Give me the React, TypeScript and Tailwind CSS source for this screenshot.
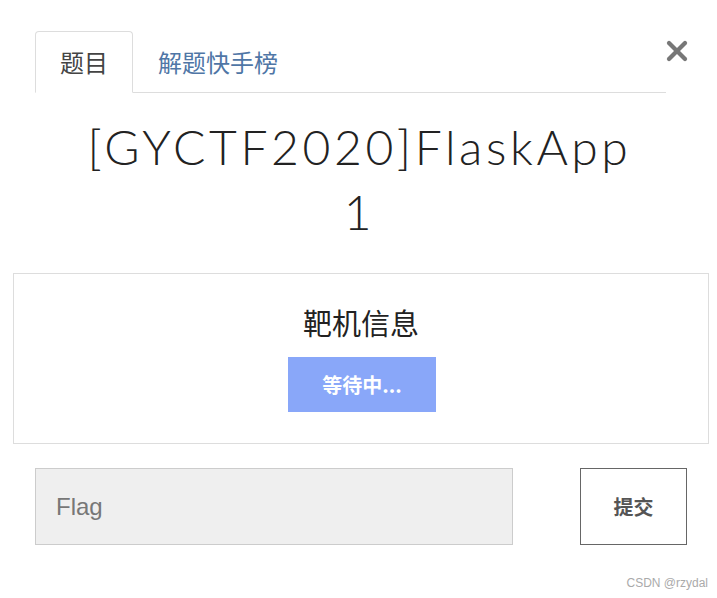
import { X } from "lucide-react";

const cjk = "font-['Microsoft_YaHei','Noto_Sans_CJK_SC',sans-serif]";

export default function App() {
  return (
    <div className="relative w-[717px] h-[598px] bg-white overflow-hidden font-['Noto_Sans','Noto_Sans_CJK_SC',sans-serif]">
      {/* tabs */}
      <div className="pl-[35px] pt-[31px] pr-[51px]">
        <div className="flex border-b border-[#dddddd] h-[62px]">
          <div className={`w-[98px] h-[62px] -mb-px flex items-center justify-center rounded-t-[4px] border border-b-white border-[#dddddd] bg-white text-[24px] text-[#444] ${cjk}`}>
            题目
          </div>
          <div className={`flex items-center pl-[25px] text-[24px] text-[#4f76a6] ${cjk}`}>
            解题快手榜
          </div>
        </div>
      </div>
      <button className="absolute left-[661px] top-[35px] text-[#777]">
        <X size={32} strokeWidth={3.2} />
      </button>

      {/* title */}
      <h1 className="mt-[21px] pl-[2px] text-center font-['Lato',sans-serif] font-light text-[48px] leading-[65px] tracking-[3.6px] text-[#222]">
        [GYCTF2020]FlaskApp
        <br />1
      </h1>

      {/* target info */}
      <div className="ml-[13px] mr-[8px] mt-[29px] h-[171px] border border-[#dddddd] flex flex-col items-center pt-[28px]">
        <div className={`text-[29px] leading-[40px] text-[#222] ${cjk}`}>靶机信息</div>
        <button className={`mt-[15px] ml-[2px] w-[148px] h-[55px] bg-[#89a7f9] text-white font-bold text-[20px] ${cjk}`}>
          等待中...
        </button>
      </div>

      {/* flag submit */}
      <div className="flex items-center mt-[24px] pl-[35px]">
        <input
          placeholder="Flag"
          className="w-[478px] h-[77px] bg-[#efefef] border border-[#cccccc] px-[20px] text-[24px] font-['Liberation_Sans',sans-serif] placeholder:text-[#777] outline-none"
        />
        <button className={`ml-[67px] w-[107px] h-[77px] border border-[#666] bg-white text-[#555] font-bold text-[20px] ${cjk}`}>
          提交
        </button>
      </div>

      <div className="absolute right-[9px] bottom-[6px] text-[12px] text-[#aaa] font-['Liberation_Sans',sans-serif]">
        CSDN @rzydal
      </div>
    </div>
  );
}
